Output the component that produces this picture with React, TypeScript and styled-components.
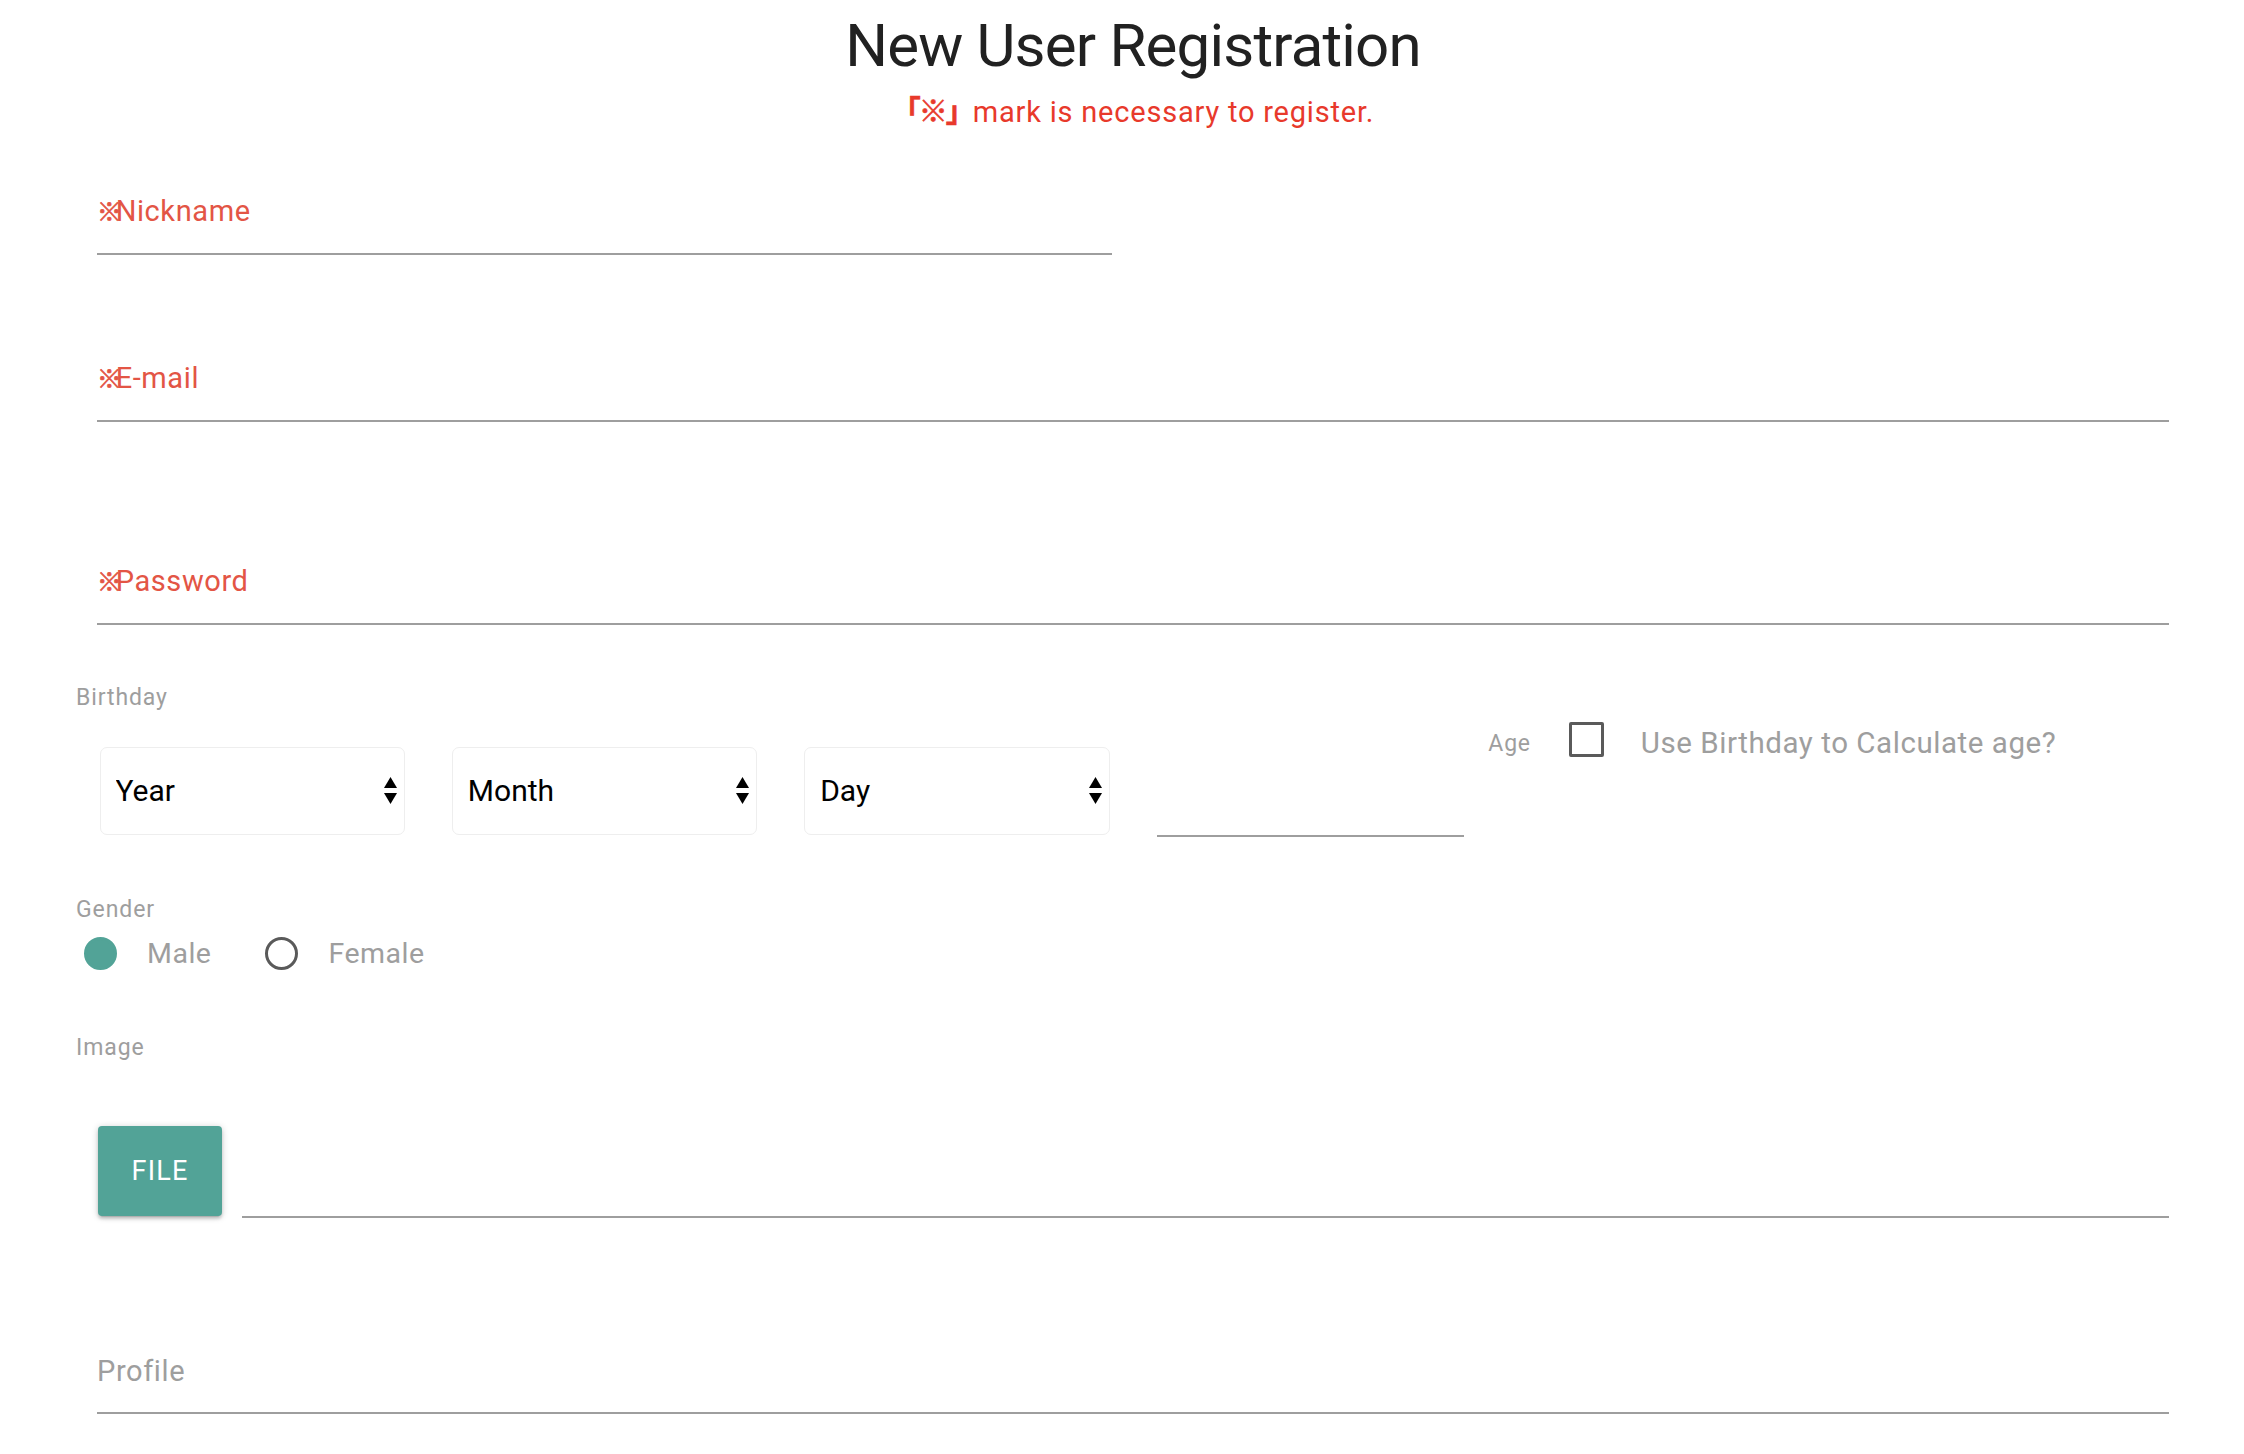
import React from "react"
import styled, { createGlobalStyle } from "styled-components"

const GlobalStyle = createGlobalStyle`
  html, body {
    margin: 0;
    padding: 0;
    background: #ffffff;
  }
  body {
    font-family: Roboto, "Noto Sans CJK JP", sans-serif;
    color: #212121;
  }
  * {
    box-sizing: border-box;
  }
`

const teal = "#52a397"
const grey = "#9e9e9e"

const Page = styled.div`
  width: 2244px;
  padding: 17px 54px 40px 76px;
`

const Form = styled.form`
  width: 2114px;
`

const Title = styled.h1`
  margin: 0;
  font-size: 60px;
  line-height: 58px;
  font-weight: 400;
  letter-spacing: -0.8px;
  text-align: center;
  color: #212121;
`

const Notice = styled.p`
  margin: 20.1px 0 0;
  font-size: 29px;
  line-height: 34px;
  letter-spacing: 0.8px;
  text-align: center;
  color: #e8392b;
`

// reference mark inside the notice and the required labels;
// line-height 0 keeps the CJK fallback font from growing the line box
const NoticeMark = styled.span`
  font-weight: 700;
  letter-spacing: -2px;
  line-height: 0;
  -webkit-text-stroke: 0.6px currentColor;
`

const LabelMark = styled.span`
  font-size: 0.85em;
  font-weight: 700;
  letter-spacing: -6px;
  line-height: 0;
  -webkit-text-stroke: 0.7px currentColor;
`

const Field = styled.div<{ $top: number; $half?: boolean }>`
  margin-top: ${(p) => p.$top}px;
  padding: 0 21px;
  width: ${(p) => (p.$half ? "50%" : "100%")};
`

const FieldLabel = styled.label<{ $required?: boolean }>`
  display: block;
  font-size: 29px;
  line-height: 34px;
  letter-spacing: 0.6px;
  color: ${(p) => (p.$required ? "#e35545" : grey)};
`

const TextInput = styled.input<{ $h?: number }>`
  display: block;
  width: 100%;
  height: ${(p) => p.$h ?? 27}px;
  margin: 0;
  padding: 0;
  border: none;
  border-bottom: 2px solid ${grey};
  background: transparent;
  outline: none;
  font: inherit;
`

const SectionLabel = styled.div<{ $top: number }>`
  margin-top: ${(p) => p.$top}px;
  font-size: 23px;
  line-height: 28px;
  letter-spacing: 0.9px;
  color: ${grey};
`

const BirthdayRow = styled.div`
  display: grid;
  grid-template-columns: repeat(6, 1fr);
  height: 125px;
`

const SelectCol = styled.div`
  padding: 35px 21px 0;
`

const SelectWrap = styled.div`
  position: relative;
  margin: 0 2.5px;
  height: 88px;
`

const NativeSelect = styled.select`
  appearance: none;
  -webkit-appearance: none;
  width: 100%;
  height: 100%;
  padding: 0 40px 0 15px;
  border: 1px solid #eeeeee;
  border-radius: 7px;
  background: #ffffff;
  font-family: Roboto, sans-serif;
  font-size: 30px;
  color: #000000;
  outline: none;
`

const Arrows = styled.svg`
  position: absolute;
  right: 8px;
  top: 30.5px;
  pointer-events: none;
`

const AgeInputCol = styled.div`
  padding: 0 21px 0 24px;
`

const AgeInput = styled.input`
  display: block;
  width: 100%;
  height: 125px;
  margin: 0;
  padding: 0;
  border: none;
  border-bottom: 2px solid ${grey};
  background: transparent;
  outline: none;
`

const AgeCol = styled.div`
  grid-column: span 2;
  padding: 10px 0 0 3px;
`

const AgeRow = styled.label`
  display: flex;
  align-items: flex-start;
  height: 35px;
`

const AgeLabel = styled.span`
  margin-top: 4px;
  margin-right: 38px;
  font-size: 23px;
  line-height: 35px;
  letter-spacing: 0.8px;
  color: ${grey};
`

const CheckBox = styled.span`
  width: 35px;
  height: 35px;
  margin-right: 37px;
  border: 3px solid #5a5a5a;
  border-radius: 2px;
  flex-shrink: 0;
`

const CheckText = styled.span`
  margin-top: 4px;
  font-size: 29.5px;
  line-height: 35px;
  letter-spacing: 0.55px;
  color: ${grey};
`

const RadioRow = styled.div`
  display: flex;
  align-items: center;
  margin-top: 10px;
  height: 40px;
  padding-left: 8px;
  gap: 54px;
`

const RadioOption = styled.label`
  display: flex;
  align-items: center;
  gap: 30px;
`

const RadioCircle = styled.span<{ $checked?: boolean }>`
  width: 33px;
  height: 33px;
  border-radius: 50%;
  border: 3px solid ${(p) => (p.$checked ? teal : "#5a5a5a")};
  background: ${(p) => (p.$checked ? teal : "transparent")};
`

const RadioText = styled.span`
  font-size: 28.5px;
  line-height: 40px;
  letter-spacing: 0.5px;
  color: ${grey};
`

const FileRow = styled.div`
  display: flex;
  align-items: flex-end;
  gap: 20px;
  margin-top: 64px;
  padding: 0 21px 0 22px;
`

const FileButton = styled.button`
  width: 124px;
  height: 90px;
  margin-bottom: 2px;
  border: none;
  border-radius: 4px;
  background: ${teal};
  color: #ffffff;
  font-family: Roboto, sans-serif;
  font-size: 27px;
  letter-spacing: 1.2px;
  text-transform: uppercase;
  box-shadow: 0 3px 3px 0 rgba(0, 0, 0, 0.14), 0 4px 1px -3px rgba(0, 0, 0, 0.12),
    0 1px 7px 0 rgba(0, 0, 0, 0.2);
`

const FilePath = styled.input`
  flex: 1;
  height: 40px;
  margin: 0;
  padding: 0;
  border: none;
  border-bottom: 2px solid ${grey};
  background: transparent;
  outline: none;
`

const SelectArrows = () => (
  <Arrows width="13" height="27" viewBox="0 0 13 27">
    <path d="M0 11 L6.5 0 L13 11 Z" fill="#000" />
    <path d="M0 16 L13 16 L6.5 27 Z" fill="#000" />
  </Arrows>
)

const DateSelect = ({ label, options }: { label: string; options: string[] }) => (
  <SelectCol>
    <SelectWrap>
      <NativeSelect defaultValue="">
        <option value="">{label}</option>
        {options.map((o) => (
          <option key={o} value={o}>
            {o}
          </option>
        ))}
      </NativeSelect>
      <SelectArrows />
    </SelectWrap>
  </SelectCol>
)

const range = (from: number, to: number) =>
  Array.from({ length: to - from + 1 }, (_, i) => String(from + i))

export default function App() {
  return (
    <Page>
      <GlobalStyle />
      <Form onSubmit={(e) => e.preventDefault()}>
        <Title>New User Registration</Title>
        <Notice>
          <NoticeMark>「※」</NoticeMark>mark is necessary to register.
        </Notice>

        <Field $top={64.6} $half>
          <FieldLabel $required htmlFor="nickname">
            <LabelMark>※</LabelMark>Nickname
          </FieldLabel>
          <TextInput id="nickname" type="text" />
        </Field>

        <Field $top={106.5}>
          <FieldLabel $required htmlFor="email">
            <LabelMark>※</LabelMark>E-mail
          </FieldLabel>
          <TextInput id="email" type="email" />
        </Field>

        <Field $top={142.2}>
          <FieldLabel $required htmlFor="password">
            <LabelMark>※</LabelMark>Password
          </FieldLabel>
          <TextInput id="password" type="password" />
        </Field>

        <SectionLabel $top={58.6}>Birthday</SectionLabel>
        <BirthdayRow>
          <DateSelect label="Year" options={range(1950, 2024)} />
          <DateSelect label="Month" options={range(1, 12)} />
          <DateSelect label="Day" options={range(1, 31)} />
          <AgeInputCol>
            <AgeInput type="number" />
          </AgeInputCol>
          <AgeCol>
            <AgeRow>
              <AgeLabel>Age</AgeLabel>
              <CheckBox />
              <CheckText>Use Birthday to Calculate age?</CheckText>
            </AgeRow>
          </AgeCol>
        </BirthdayRow>

        <SectionLabel $top={59}>Gender</SectionLabel>
        <RadioRow>
          <RadioOption>
            <RadioCircle $checked />
            <RadioText>Male</RadioText>
          </RadioOption>
          <RadioOption>
            <RadioCircle />
            <RadioText>Female</RadioText>
          </RadioOption>
        </RadioRow>

        <SectionLabel $top={59.6}>Image</SectionLabel>
        <FileRow>
          <FileButton type="button">File</FileButton>
          <FilePath type="text" readOnly />
        </FileRow>

        <Field $top={136}>
          <FieldLabel htmlFor="profile">Profile</FieldLabel>
          <TextInput id="profile" type="text" $h={26} />
        </Field>
      </Form>
    </Page>
  )
}
